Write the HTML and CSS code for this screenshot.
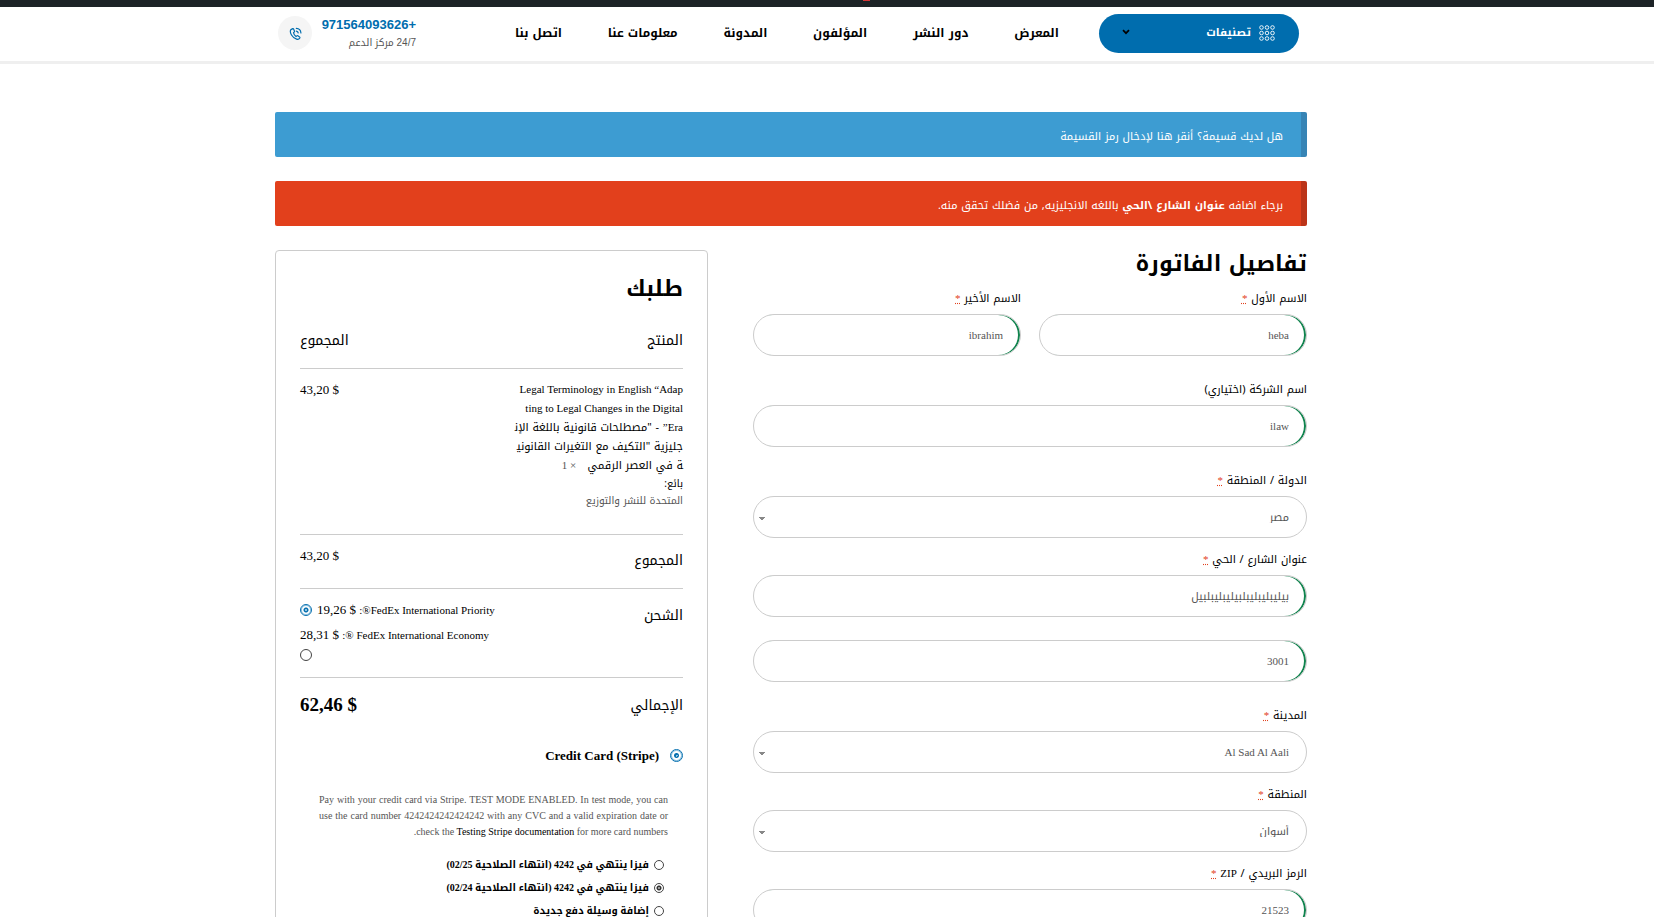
FILE: index.html
```html
<!DOCTYPE html>
<html lang="ar" dir="rtl">
<head>
<meta charset="utf-8">
<title>إتمام الطلب</title>
<link rel="stylesheet" href="styles.css">
</head>
<body>
<div class="admin-bar"><span class="admin-dot"></span></div>
<header class="header">
  <div class="wrap header-row">
    <button class="categories" type="button">
      <svg class="grid-icon" viewBox="0 0 16 16" aria-hidden="true"><g fill="none" stroke="currentColor" stroke-width=".9"><circle cx="2.5" cy="2.5" r="1.8"/><circle cx="8" cy="2.5" r="1.8"/><circle cx="13.5" cy="2.5" r="1.8"/><circle cx="2.5" cy="8" r="1.8"/><circle cx="8" cy="8" r="1.8"/><circle cx="13.5" cy="8" r="1.8"/><circle cx="2.5" cy="13.5" r="1.8"/><circle cx="8" cy="13.5" r="1.8"/><circle cx="13.5" cy="13.5" r="1.8"/></g></svg>
      <span>تصنيفات</span>
      <svg class="chevron" viewBox="0 0 8 6" aria-hidden="true"><path d="M1 1.2l3 3 3-3" fill="none" stroke="currentColor" stroke-width="1.7"/></svg>
    </button>
    <nav class="nav">
      <a href="#">المعرض</a><a href="#">دور النشر</a><a href="#">المؤلفون</a><a href="#">المدونة</a><a href="#">معلومات عنا</a><a href="#">اتصل بنا</a>
    </nav>
    <div class="support">
      <div class="support-text">
        <a class="phone" href="tel:+971564093626">+971564093626</a>
        <span class="support-note">24/7 مركز الدعم</span>
      </div>
      <span class="phone-badge">
        <svg viewBox="0 0 24 24" aria-hidden="true"><g fill="none" stroke="currentColor" stroke-width="2.2" stroke-linecap="round" stroke-linejoin="round"><path d="M7 3 3.500 4.800C0 10 6.500 20.500 14 22.500c2.500.7 4.800-.2 6-2.300.3-.7.1-1.300-.5-1.700l-3.300-2.200c-.6-.4-1.200-.3-1.700.1l-1.500 1.200C10.800 16 8.800 13.500 8.300 10.500l1.400-1.300c.5-.5.6-1 .3-1.600L8.500 3.800C8.200 3.100 7.700 2.800 7 3z"/><path d="M13.500 7.500c2 .2 3.200 1.400 3.500 3.500M13.500 2.500c4.800.2 8.200 3.800 8.500 8.500"/></g></svg>
      </span>
    </div>
  </div>
</header>

<main class="wrap main">
  <div class="notice notice-info"><a href="#">هل لديك قسيمة؟ أنقر هنا لإدخال رمز القسيمة</a></div>
  <div class="notice notice-error" role="alert">برجاء اضافه <strong>عنوان الشارع \الحي</strong> باللغه الانجليزيه, من فضلك تحقق منه.</div>

  <form class="checkout">
    <section class="billing">
      <h2 class="title">تفاصيل الفاتورة</h2>
      <div class="pair">
        <div class="field"><label for="first">الاسم الأول <abbr title="مطلوب">*</abbr></label><input class="box valid" id="first" type="text" value="heba"></div>
        <div class="field"><label for="last">الاسم الأخير <abbr title="مطلوب">*</abbr></label><input class="box valid" id="last" type="text" value="ibrahim"></div>
      </div>
      <div class="field"><label for="company">اسم الشركة (اختياري)</label><input class="box valid" id="company" type="text" value="ilaw"></div>
      <div class="field field-select"><label for="country">الدولة / المنطقة <abbr title="مطلوب">*</abbr></label><select class="box" id="country"><option>مصر</option></select></div>
      <div class="field"><label for="street">عنوان الشارع / الحي <abbr title="مطلوب">*</abbr></label><input class="box valid" id="street" type="text" value="بيليبليبليبلبيليبليبلبيل"></div>
      <div class="field"><input class="box valid" type="text" aria-label="رقم المبنى" value="3001"></div>
      <div class="field field-select"><label for="city">المدينة <abbr title="مطلوب">*</abbr></label><select class="box" id="city"><option>Al Sad Al Aali</option></select></div>
      <div class="field field-select"><label for="state">المنطقة <abbr title="مطلوب">*</abbr></label><select class="box" id="state"><option>أسوان</option></select></div>
      <div class="field"><label for="zip">الرمز البريدي / <span class="latin">ZIP</span> <abbr title="مطلوب">*</abbr></label><input class="box valid" id="zip" type="text" value="21523"></div>
    </section>

    <section class="order">
      <h2 class="title order-title">طلبك</h2>
      <table class="totals">
        <thead><tr><th>المنتج</th><th class="amount">المجموع</th></tr></thead>
        <tbody>
          <tr class="item">
            <td>
              <div class="product"><span class="latin">Legal Terminology in English “Adap<br>ting to Legal Changes in the Digital<br>Era”</span> - "مصطلحات قانونية باللغة الإن&zwj;<br>جليزية "التكيف مع التغيرات القانوني&zwj;<br>&zwj;ة في العصر الرقمي &nbsp; <span class="latin qty">× 1</span></div>
              <div class="seller">بائع:</div>
              <div class="seller seller-name">المتحدة للنشر والتوزيع</div>
            </td>
            <td class="amount">$&nbsp;43,20</td>
          </tr>
          <tr class="subtotal"><th>المجموع</th><td class="amount">$&nbsp;43,20</td></tr>
          <tr class="shipping"><th>الشحن</th><td class="amount">
            <div class="ship"><label for="ship1"><span class="ship-name">FedEx International Priority®:</span> <bdi dir="rtl">$&nbsp;19,26</bdi></label><input class="radio blue" type="radio" name="ship" id="ship1" checked></div>
            <div class="ship ship-wrap"><label for="ship2"><span class="ship-name">FedEx International Economy ®:</span> <bdi dir="rtl">$&nbsp;28,31</bdi></label><input class="radio" type="radio" name="ship" id="ship2"></div>
          </td></tr>
          <tr class="grand"><th>الإجمالي</th><td class="amount">$&nbsp;62,46</td></tr>
        </tbody>
      </table>
      <div class="method"><input class="radio blue large" type="radio" name="method" id="stripe" checked><label for="stripe" dir="ltr">Credit Card (Stripe)</label></div>
      <div class="stripe">
        <p><span class="full-line">Pay with your credit card via Stripe. TEST MODE ENABLED. In test mode, you can</span> <span class="full-line">use the card number 4242424242424242 with any CVC and a valid expiration date or</span> check the <a href="#">Testing Stripe documentation</a> for more card numbers.</p>
        <div class="saved"><input class="radio small" type="radio" name="card" id="c1"><label for="c1">فيزا ينتهي في 4242 (انتهاء الصلاحية 02/25)</label></div>
        <div class="saved"><input class="radio small" type="radio" name="card" id="c2" checked><label for="c2">فيزا ينتهي في 4242 (انتهاء الصلاحية 02/24)</label></div>
        <div class="saved"><input class="radio small" type="radio" name="card" id="c3"><label for="c3">إضافة وسيلة دفع جديدة</label></div>
      </div>
    </section>
  </form>
</main>
</body>
</html>
```
FILE: styles.css
```css
:root {
  --kufi: "Noto Kufi Arabic", "DejaVu Sans", sans-serif;
  --serif: "Liberation Serif", "Noto Kufi Arabic", "DejaVu Sans", serif;
}
* { box-sizing: border-box; }
html { overflow: hidden; height: 100%; }
body {
  margin: 0;
  height: 100%;
  overflow: hidden;
  background: #fff;
  color: #000;
  font: 11px/20px var(--kufi);
}
a { color: inherit; text-decoration: none; }
input, select, button { font-family: inherit; }
.latin { font-family: var(--serif); line-height: 1; }

.admin-bar { height: 7px; background: #1d2327; display: flex; justify-content: center; overflow: hidden; padding-left: 78px; }
.admin-dot { width: 7px; height: 1px; background: #d63638; }

.wrap { width: calc(100% - 72px); max-width: 1104px; margin: 0 auto; padding-right: 72px; }
.header { border-bottom: 3px solid #efefef; }
.header-row { display: flex; align-items: center; height: 54px; padding-right: 80px; padding-left: 3px; padding-bottom: 2px; }

.categories {
  display: flex; align-items: center; gap: 8px;
  width: 200px; height: 39px; padding: 0 24px 2px 23px;
  border: 0; border-radius: 20px;
  background: #006dae; color: #fff;
  font-size: 11px; font-weight: 700;
}
.grid-icon { width: 16px; height: 16px; margin-top: 2px; }
.chevron { width: 8px; height: 6px; margin-right: auto; color: #000; }
.nav { display: flex; flex: 1; justify-content: space-between; padding: 0 40px 0 99px; font-size: 12px; font-weight: 700; }
.support { display: flex; align-items: center; gap: 11px; }
.support-text { display: flex; flex-direction: column; width: 93px; padding-top: 2px; text-align: right; }
.phone { color: #006dae; font: 700 13px/18px "Liberation Sans", sans-serif; }
.support-note { color: #555; font: 10px/18px "Liberation Sans", "Noto Kufi Arabic", sans-serif; white-space: nowrap; }
.phone-badge { display: flex; align-items: center; justify-content: center; width: 34px; height: 34px; border-radius: 50%; background: #f5f5f5; color: #006dae; }
.phone-badge svg { width: 13px; height: 13px; }

.main { padding-top: 48px; }
.notice { min-height: 45px; margin-bottom: 24px; padding: 15px 18px 10px; border-right: 6px solid; border-radius: 2px; color: #fff; }
.notice-info { background: #3d9cd2; border-color: #3784b5; }
.notice-error { background: #e2401c; border-color: #bb3419; }

.checkout { display: grid; grid-template-columns: minmax(0, 554fr) minmax(0, 433fr); gap: 45px; align-items: start; }
.title { margin: 0; font-size: 22px; line-height: 28px; font-weight: 700; }
.billing .title { margin-bottom: 10px; }
.pair { display: grid; grid-template-columns: 1fr 1fr; gap: 18px; }
.field { margin-bottom: 23px; }
.field-select { margin-bottom: 11px; }
.field label { display: block; margin-bottom: 4px; line-height: 22px; }
abbr { color: #e2401c; font-family: var(--serif); line-height: 1; text-decoration: underline dotted; }
.box {
  display: block; width: 100%; height: 42px; padding: 0 17px;
  border: 1px solid #ccc; border-radius: 21px;
  background-color: #fff; color: #555;
  font-family: var(--serif); font-size: 11px;
}
.valid { box-shadow: inset -2px 0 0 #0f834d; }
select.box {
  appearance: none;
  background-image: linear-gradient(to bottom right, #888 50%, transparent 50%), linear-gradient(to bottom left, #888 50%, transparent 50%);
  background-position: 5px 20px, 8px 20px;
  background-position: 8px 20px, 5px 20px;
  background-size: 3px 4px;
  background-repeat: no-repeat;
}

.order { border: 1px solid #ccc; border-radius: 4px; padding: 24px; min-height: 720px; }
.order-title { margin-bottom: 20px; }
.totals { width: 100%; border-collapse: collapse; }
.totals th, .totals td { padding: 0; text-align: right; vertical-align: top; font-weight: 400; }
.totals th { font-size: 14px; line-height: 24px; }
.totals tr { border-bottom: 1px solid #ccc; }
.totals .amount { text-align: left; }
.totals td.amount { font-family: var(--serif); font-size: 13px; line-height: 20px; white-space: nowrap; }
.totals thead th { height: 45px; padding-top: 6px; }
.item { height: 166px; }
.totals .item td { padding-top: 11px; }
.product { line-height: 19px; white-space: nowrap; }
.qty, .seller-name { color: #555; }
.seller { font-size: 10px; line-height: 17px; }
.subtotal { height: 54px; }
.totals .subtotal th { padding-top: 14px; }
.totals .subtotal td { padding-top: 11px; }
.shipping { height: 89px; }
.totals .shipping th { padding-top: 15px; }
.totals .shipping td { padding-top: 11px; }
.ship-name { font-size: 11px; }
.ship { display: flex; align-items: center; justify-content: flex-end; gap: 5px; margin-bottom: 5px; }
.ship-wrap { flex-direction: column; align-items: flex-end; gap: 4px; }
.totals .grand { border: 0; }
.totals .grand th { padding-top: 16px; }
.totals .grand td { padding-top: 15px; font-size: 19px; line-height: 24px; font-weight: 700; }

.radio { appearance: none; flex: none; width: 12px; height: 12px; margin: 0; border: 1px solid #444; border-radius: 50%; background: #fff; }
.radio:checked { background: radial-gradient(circle, #999 0 1px, #333 1px 2px, #fff 3px); }
.radio.blue { border-color: #0670b0; box-shadow: inset 0 0 0 1px #8cc0de; }
.radio.blue:checked { background: radial-gradient(circle, #8cc0de 0 1px, #0670b0 1px 2px, #fff 3px); }
.small { width: 10px; height: 10px; }
.large { width: 13px; height: 13px; }
.method { display: flex; align-items: center; gap: 11px; margin-top: 28px; font-family: var(--serif); font-size: 13px; font-weight: 700; }
.stripe { padding: 26px 15px 0 19px; font-family: var(--serif); font-size: 10px; }
.stripe p { margin: 0; color: #555; line-height: 16px; }
.full-line { display: block; text-align: justify; text-align-last: justify; }
.stripe p a { color: #000; }
.saved { display: flex; align-items: center; gap: 5px; height: 23px; font-weight: 700; padding-right: 4px; }
.stripe p + .saved { margin-top: 14px; }
```
